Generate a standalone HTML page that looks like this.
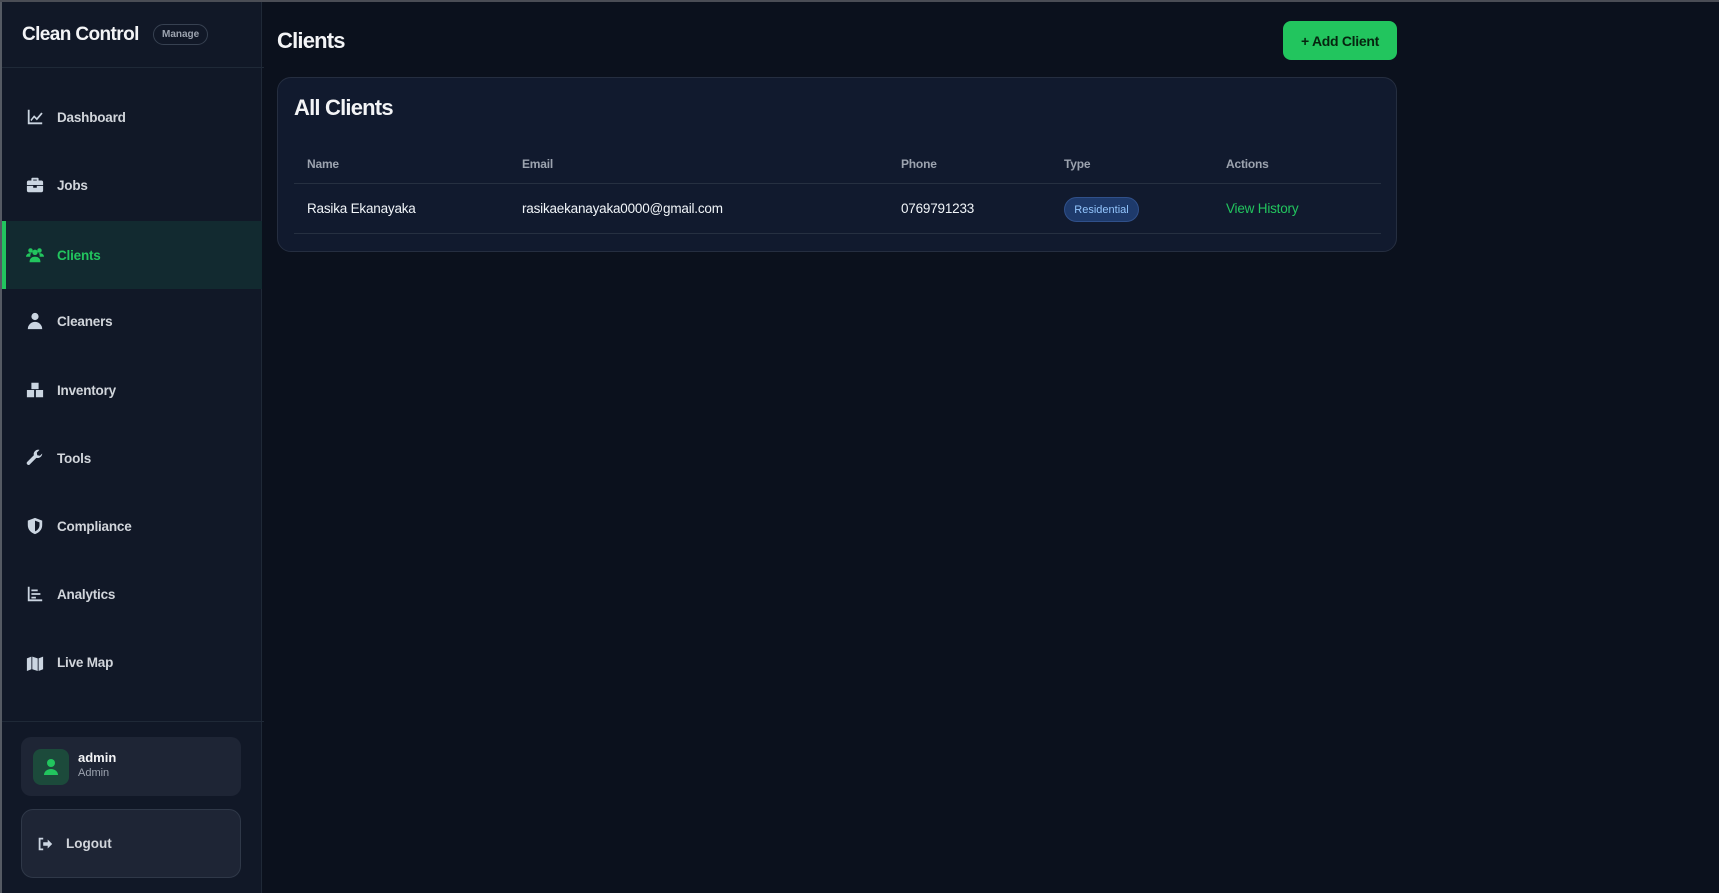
<!DOCTYPE html>
<html><head><meta charset="utf-8"><style>
*{box-sizing:border-box;margin:0;padding:0}
body{width:1719px;height:891px;background:#0b111d;font-family:"Liberation Sans",sans-serif;overflow:hidden;position:relative;border-top:2px solid #4a4d55}
.sb{position:absolute;left:0;top:0;width:262px;height:891px;background:#111827;border-left:2px solid #555a63;border-right:1px solid #1f2937}
.brand{position:absolute;left:20px;top:22px;color:#f3f4f6;font-weight:bold;font-size:19px;letter-spacing:-0.6px}
.badge{position:absolute;left:151px;top:22px;border:1px solid #374151;border-radius:12px;font-size:10px;color:#9ca3af;font-weight:bold;padding:4px 8px}
.hl{position:absolute;left:0;width:262px;height:1px;background:#1f2937}
.nav{position:absolute;left:0;width:260px;height:68px;display:flex;align-items:center;padding-left:24px;color:#d1d5db;font-weight:bold;font-size:13.5px;letter-spacing:-0.2px}
.nav svg{width:18px;height:18px;margin-right:13px;fill:#cbd5e1}
.nav.act{background:#122a30;color:#22c55e;border-left:4px solid #22c55e;padding-left:20px}
.nav.act svg{fill:#22c55e}
.user{position:absolute;left:21px;top:735px;width:220px;height:59px;background:#1e2535;border-radius:10px}
.av{position:absolute;left:12px;top:12px;width:36px;height:36px;border-radius:8px;background:#1c4a3b}
.logout{position:absolute;left:21px;top:807px;width:220px;height:69px;background:#1e2535;border:1px solid #2f3848;border-radius:12px;display:flex;align-items:center;padding-left:14px;color:#d1d5db;font-weight:bold;font-size:13.5px}
h1{position:absolute;left:277px;top:26px;color:#f3f4f6;font-size:22px;letter-spacing:-0.8px}
.btn{position:absolute;left:1283px;top:19px;width:114px;height:39px;background:#22c55e;border-radius:8px;color:#06240f;font-weight:bold;font-size:14px;letter-spacing:-0.3px;display:flex;align-items:center;justify-content:center}
.card{position:absolute;left:277px;top:75px;width:1120px;height:175px;background:#111a2e;border:1px solid #252e40;border-radius:14px}
.card h2{position:absolute;left:16px;top:17px;color:#f3f4f6;font-size:22px;letter-spacing:-0.8px}
.th{position:absolute;top:79px;color:#9ca3af;font-size:12px;font-weight:bold;letter-spacing:-0.2px}
.td{position:absolute;top:123px;color:#f1f5f9;font-size:13.5px;letter-spacing:-0.2px}
.line{position:absolute;left:16px;width:1087px;height:1px;background:#263041}
.pill{position:absolute;left:786px;top:119px;width:75px;height:25px;border-radius:13px;background:#1e3a6b;border:1px solid #30508a;color:#93c5fd;font-size:11px;display:flex;align-items:center;justify-content:center}
</style></head><body>
<div class="sb">
<div class="brand">Clean Control</div><div class="badge">Manage</div>
<div class="hl" style="top:65px"></div>
<div class="nav" style="top:81px"><svg viewBox="0 0 20 20"><path d="M2 2h2v14h14v2H2z M5 13l4-5 3 3 5-6 1.5 1.2-6.4 7.5-3-3-3.3 4z"/></svg>Dashboard</div>
<div class="nav" style="top:149px"><svg viewBox="0 0 20 20"><path d="M7 2h6a1 1 0 011 1v2h3a2 2 0 012 2v3H1V7a2 2 0 012-2h3V3a1 1 0 011-1zm1 2v1h4V4zM1 11h7v2h4v-2h7v5a2 2 0 01-2 2H3a2 2 0 01-2-2z"/></svg>Jobs</div>
<div class="nav act" style="top:219px"><svg viewBox="0 0 20 20"><circle cx="5" cy="5" r="2.5"/><circle cx="15" cy="5" r="2.5"/><circle cx="10" cy="7" r="3"/><path d="M0 12a4 4 0 014-4h2a4 4 0 00-1 4zM20 12a4 4 0 00-4-4h-2a4 4 0 011 4zM4 17a5 5 0 015-5h2a5 5 0 015 5v1H4z"/></svg>Clients</div>
<div class="nav" style="top:285px"><svg viewBox="0 0 20 20"><circle cx="10" cy="5" r="4"/><path d="M2 19a8 8 0 0116 0z"/></svg>Cleaners</div>
<div class="nav" style="top:354px"><svg viewBox="0 0 20 20"><path d="M6 2h8v7H6zM1 10h8v8H1zM11 10h8v8h-8z"/></svg>Inventory</div>
<div class="nav" style="top:422px"><svg viewBox="0 0 20 20"><path d="M18 5a5 5 0 01-6.5 4.8L4 17.3a2 2 0 01-2.8-2.8l7.5-7.5A5 5 0 0115 1l-3 3 .5 3 3 .5z"/></svg>Tools</div>
<div class="nav" style="top:490px"><svg viewBox="0 0 20 20"><path d="M10 1l8 3v5c0 5-3.5 8.5-8 10-4.5-1.5-8-5-8-10V4zm0 3v12c3-1.3 5-4 5-7V6z"/></svg>Compliance</div>
<div class="nav" style="top:558px"><svg viewBox="0 0 20 20"><path d="M2 2h2v14h14v2H2zM6 5h7v2H6zM6 9h10v2H6zM6 13h5v2H6z"/></svg>Analytics</div>
<div class="nav" style="top:626px"><svg viewBox="0 0 20 20"><path d="M1 6l5-2v14l-5 2zM7 4l6 2v14l-6-2zM14 6l5-2v14l-5 2z"/></svg>Live Map</div>
<div class="hl" style="top:719px"></div>
</div>
<div class="user"><div class="av"><svg viewBox="0 0 36 36" width="36" height="36"><circle cx="18" cy="14" r="4" fill="#22c55e"/><path d="M11 26a7 6 0 0114 0z" fill="#22c55e"/></svg></div>
<div style="position:absolute;left:57px;top:13px;color:#f3f4f6;font-weight:bold;font-size:13px">admin</div>
<div style="position:absolute;left:57px;top:30px;color:#9ca3af;font-size:11px">Admin</div></div>
<div class="logout"><svg viewBox="0 0 20 20" width="18" height="18" style="margin-right:12px"><path d="M3 3h5v2H5v10h3v2H3z" fill="#cbd5e1"/><path d="M8 8h5V5l5 5-5 5v-3H8z" fill="#cbd5e1"/></svg>Logout</div>
<h1>Clients</h1>
<div class="btn">+ Add Client</div>
<div class="card"><h2>All Clients</h2>
<div class="th" style="left:29px">Name</div><div class="th" style="left:244px">Email</div><div class="th" style="left:623px">Phone</div><div class="th" style="left:786px">Type</div><div class="th" style="left:948px">Actions</div>
<div class="line" style="top:105px"></div>
<div class="td" style="left:29px">Rasika Ekanayaka</div><div class="td" style="left:244px">rasikaekanayaka0000@gmail.com</div><div class="td" style="left:623px">0769791233</div>
<div class="pill">Residential</div>
<div class="td" style="left:948px;color:#22c55e">View History</div>
<div class="line" style="top:155px"></div>
</div>
</body></html>
